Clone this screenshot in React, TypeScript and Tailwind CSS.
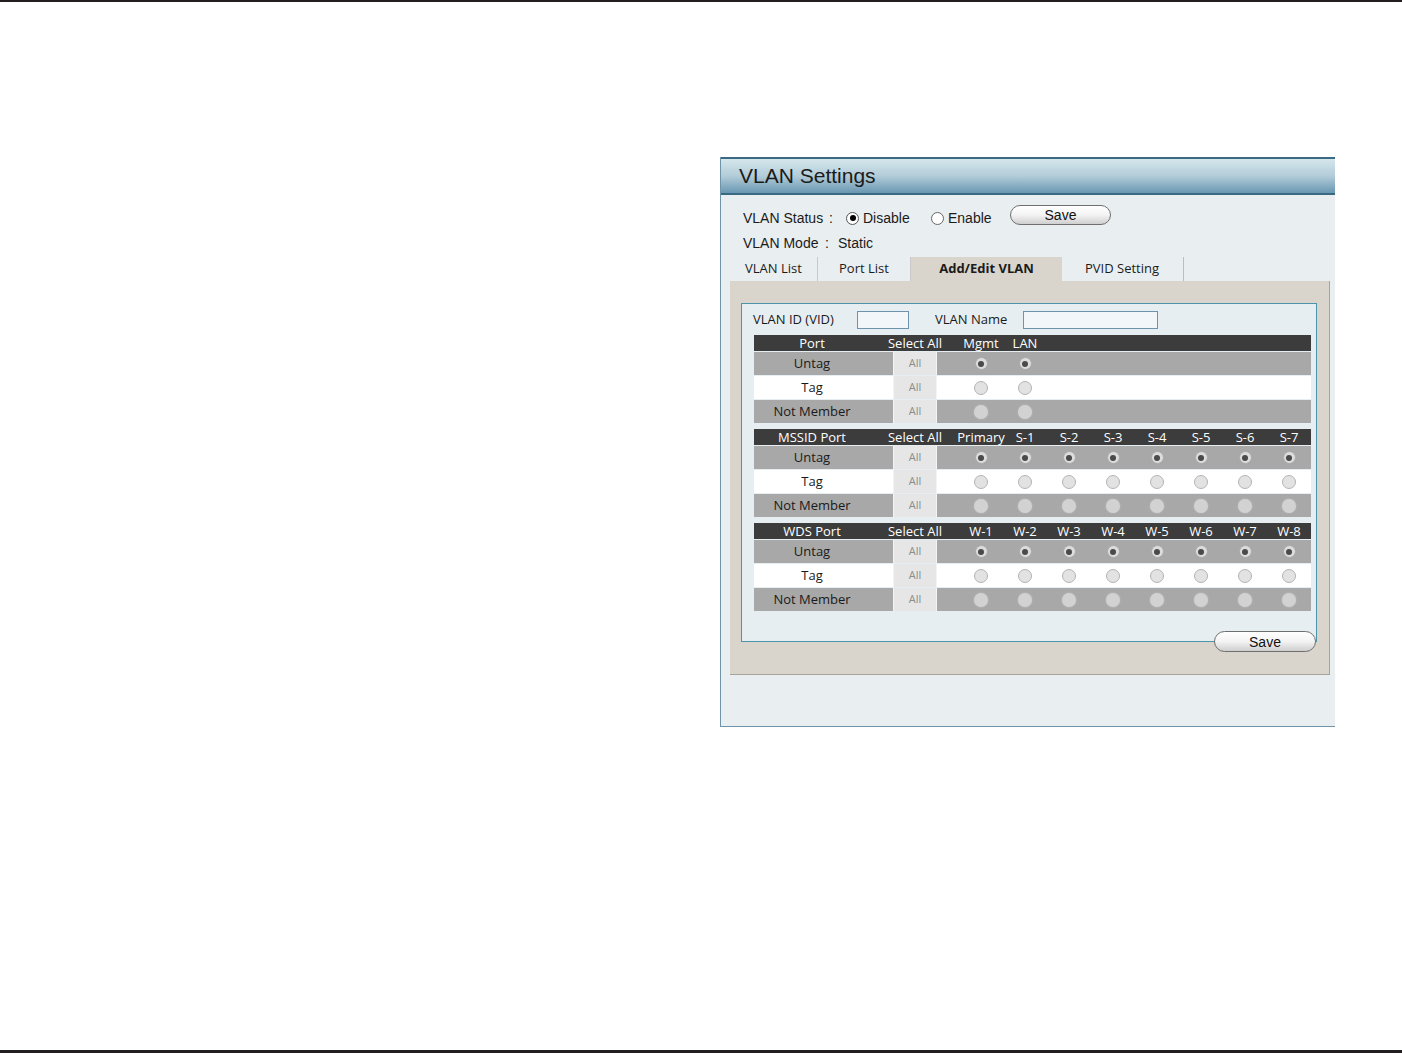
import React from "react";

type Mark = "sel" | "empty" | "dis";

const sans = { fontFamily: '"Liberation Sans", Arial, sans-serif' };
const tahoma = { fontFamily: '"Open Sans", "DejaVu Sans", sans-serif' };

function Dot({ mark }: { mark: Mark }) {
  if (mark === "sel")
    return (
      <span className="flex h-[13px] w-[13px] items-center justify-center rounded-full border border-[#a9a9a9] bg-[#dcdcdc]">
        <span className="h-[6px] w-[6px] rounded-full bg-[#4a4a4a]" />
      </span>
    );
  if (mark === "empty")
    return <span className="h-[14px] w-[14px] rounded-full border border-[#b4b4b4] bg-[#e2e2e2]" />;
  return <span className="h-[14px] w-[14px] rounded-full bg-[#d2d2d2] shadow-[0_0_2px_#c4c4c4]" />;
}

// 8 radio columns; only the named ones carry radios
function Group({ title, cols }: { title: string; cols: string[] }) {
  const rows: { label: string; mark: Mark; bg: string }[] = [
    { label: "Untag", mark: "sel", bg: "bg-[#a8a8a8]" },
    { label: "Tag", mark: "empty", bg: "bg-white" },
    { label: "Not Member", mark: "dis", bg: "bg-[#a8a8a8]" },
  ];
  const slots = Array.from({ length: 8 }, (_, i) => cols[i] ?? "");
  return (
    <div className="flex flex-col" style={tahoma}>
      <div className="flex h-[16px] items-center bg-[#3c3c3c] text-[13px] leading-none text-white">
        <div className="w-[139px] pr-[23px] text-center whitespace-nowrap">{title}</div>
        <div className="flex w-[44px] justify-center whitespace-nowrap">Select All</div>
        <div className="w-[22px]" />
        {slots.map((c, i) => (
          <div key={i} className="flex w-[44px] justify-center whitespace-nowrap">
            {c}
          </div>
        ))}
      </div>
      {rows.map((r) => (
        <div key={r.label} className={`flex h-[24px] items-center border-t border-[#e6eef1] ${r.bg} text-[13px] text-[#1a1a1a]`}>
          <div className="w-[139px] pr-[23px] text-center whitespace-nowrap">{r.label}</div>
          <div className="flex h-full w-[44px] items-center justify-center border-x border-[#f4f4f4] bg-[#e6e6e6] text-[11px] text-[#8c8c8c]">
            All
          </div>
          <div className="w-[22px]" />
          {slots.map((c, i) => (
            <div key={i} className="flex w-[44px] justify-center">
              {c && <Dot mark={r.mark} />}
            </div>
          ))}
        </div>
      ))}
    </div>
  );
}

function PillButton({ label, className }: { label: string; className: string }) {
  return (
    <button
      type="button"
      className={`rounded-full border border-[#6f6f6f] bg-linear-to-b from-white via-[#f3f3f3] to-[#cfcfcf] text-[14px] text-[#111] ${className}`}
      style={sans}
    >
      {label}
    </button>
  );
}

export default function App() {
  const mssid = ["Primary", "S-1", "S-2", "S-3", "S-4", "S-5", "S-6", "S-7"];
  const wds = ["W-1", "W-2", "W-3", "W-4", "W-5", "W-6", "W-7", "W-8"];
  return (
    <div className="flex h-[1054px] w-[1402px] flex-col bg-white">
      <div className="h-[2px] bg-[#231f20]" />

      <div className="ml-[720px] mt-[155px] flex h-[570px] w-[615px] flex-col border-b border-l border-[#6f93a7] bg-[#e9eef0]">
        <div
          className="flex h-[38px] items-center border-y-2 border-[#3a6a82] bg-linear-to-b from-[#d6e7ec] via-[#b2ccd8] to-[#6997b2] pl-[18px] text-[21px] text-[#1b1b1b]"
          style={sans}
        >
          VLAN Settings
        </div>

        <div className="flex flex-col pl-[22px] pt-[11px] text-[14px] text-[#1b1b1b]" style={sans}>
          <div className="flex h-[24px] items-center">
            <span className="w-[86px]">VLAN Status</span>
            <span className="w-[17px]">:</span>
            <span className="flex h-[13px] w-[13px] items-center justify-center rounded-full border border-[#555] bg-white">
              <span className="h-[6px] w-[6px] rounded-full bg-black" />
            </span>
            <span className="ml-[4px] w-[68px]">Disable</span>
            <span className="h-[13px] w-[13px] rounded-full border border-[#666] bg-white" />
            <span className="ml-[4px] w-[62px]">Enable</span>
            <PillButton label="Save" className="-mt-[6px] h-[20px] w-[101px] leading-none" />
          </div>
          <div className="flex h-[26px] items-center">
            <span className="w-[82px]">VLAN Mode</span>
            <span className="w-[13px]">:</span>
            <span>Static</span>
          </div>
        </div>

        <div className="ml-[9px] mt-[1px] flex h-[24px] items-stretch text-[13px] text-[#1b1b1b]" style={tahoma}>
          <div className="flex w-[88px] items-center border-r border-[#c9c9c9] pl-[15px]">VLAN List</div>
          <div className="flex w-[93px] items-center border-r border-[#c9c9c9] pl-[21px]">Port List</div>
          <div className="flex w-[151px] items-center justify-center bg-[#d9d4cc] font-bold">Add/Edit VLAN</div>
          <div className="flex w-[122px] items-center border-r border-[#bdbdbd] pl-[23px]">PVID Setting</div>
        </div>

        <div className="ml-[9px] flex h-[394px] w-[600px] flex-col border-r border-b border-[#a7a49d] bg-[#d9d4cc]">
          <div className="ml-[11px] mt-[22px] flex h-[339px] w-[576px] flex-col border border-[#4c94aa] bg-[#e6eef1] pl-[12px] pt-[6px]">
            <div className="flex h-[20px] items-center text-[13px] text-[#1a1a1a]" style={tahoma}>
              <span className="ml-[-1px] w-[104px]">VLAN ID (VID)</span>
              <span className="h-[18px] w-[52px] border border-[#6e93ad] bg-[#f2f6f8]" />
              <span className="ml-[26px] w-[88px]">VLAN Name</span>
              <span className="h-[18px] w-[135px] border border-[#6e93ad] bg-[#f2f6f8]" />
            </div>
            <div className="mt-[5px] flex w-[557px] flex-col gap-[6px]">
              <Group title="Port" cols={["Mgmt", "LAN"]} />
              <Group title="MSSID Port" cols={mssid} />
              <Group title="WDS Port" cols={wds} />
            </div>
          </div>
          <div className="-mt-[11px] mr-[13px] flex justify-end">
            <PillButton label="Save" className="h-[21px] w-[102px]" />
          </div>
        </div>
      </div>

      <div className="flex-1" />
      <div className="mb-[1px] h-[3px] bg-[#231f20]" />
    </div>
  );
}
